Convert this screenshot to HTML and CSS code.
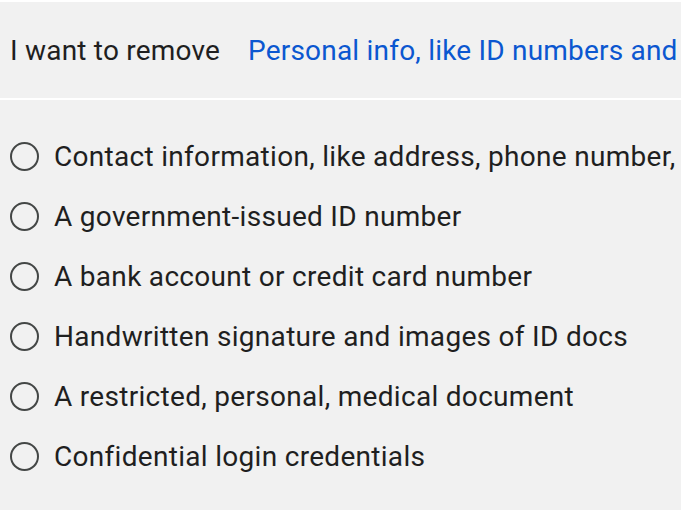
FILE: index.html
```html
<!DOCTYPE html>
<html lang="en">
<head>
<meta charset="utf-8">
<link rel="stylesheet" href="styles.css">
</head>
<body>
<div class="page">
  <div class="header">
    <span class="label">I want to remove</span>
    <span class="value">Personal info, like ID numbers and</span>
  </div>
  <ul class="options">
    <li class="option"><span class="radio"></span><span class="text">Contact information, like address, phone number,</span></li>
    <li class="option"><span class="radio"></span><span class="text">A government-issued ID number</span></li>
    <li class="option"><span class="radio"></span><span class="text">A bank account or credit card number</span></li>
    <li class="option"><span class="radio"></span><span class="text">Handwritten signature and images of ID docs</span></li>
    <li class="option"><span class="radio"></span><span class="text">A restricted, personal, medical document</span></li>
    <li class="option"><span class="radio"></span><span class="text">Confidential login credentials</span></li>
  </ul>
</div>
</body>
</html>
```
FILE: styles.css
```css
html, body {
  margin: 0;
  padding: 0;
  background: #f1f1f1;
}
body {
  font-family: Roboto, "Noto Sans", sans-serif;
  color: #1f1f1f;
  overflow: hidden;
  width: 681px;
  height: 510px;
}
.page {
  border-top: 2px solid #ffffff;
}
.header {
  display: flex;
  align-items: center;
  gap: 28px;
  height: 96px;
  padding-left: 10px;
  border-bottom: 2px solid #ffffff;
  white-space: nowrap;
  font-size: 28px;
  letter-spacing: 0.2px;
}
.value {
  color: #0b57d0;
}
.options {
  list-style: none;
  margin: 0;
  padding: 26px 0 0 0;
}
.option {
  display: flex;
  align-items: center;
  height: 60px;
  padding-left: 10px;
  gap: 15px;
  font-size: 28px;
  letter-spacing: 0.3px;
  white-space: nowrap;
}
.radio {
  flex: none;
  width: 25px;
  height: 25px;
  border: 2px solid #444746;
  border-radius: 50%;
}
```
